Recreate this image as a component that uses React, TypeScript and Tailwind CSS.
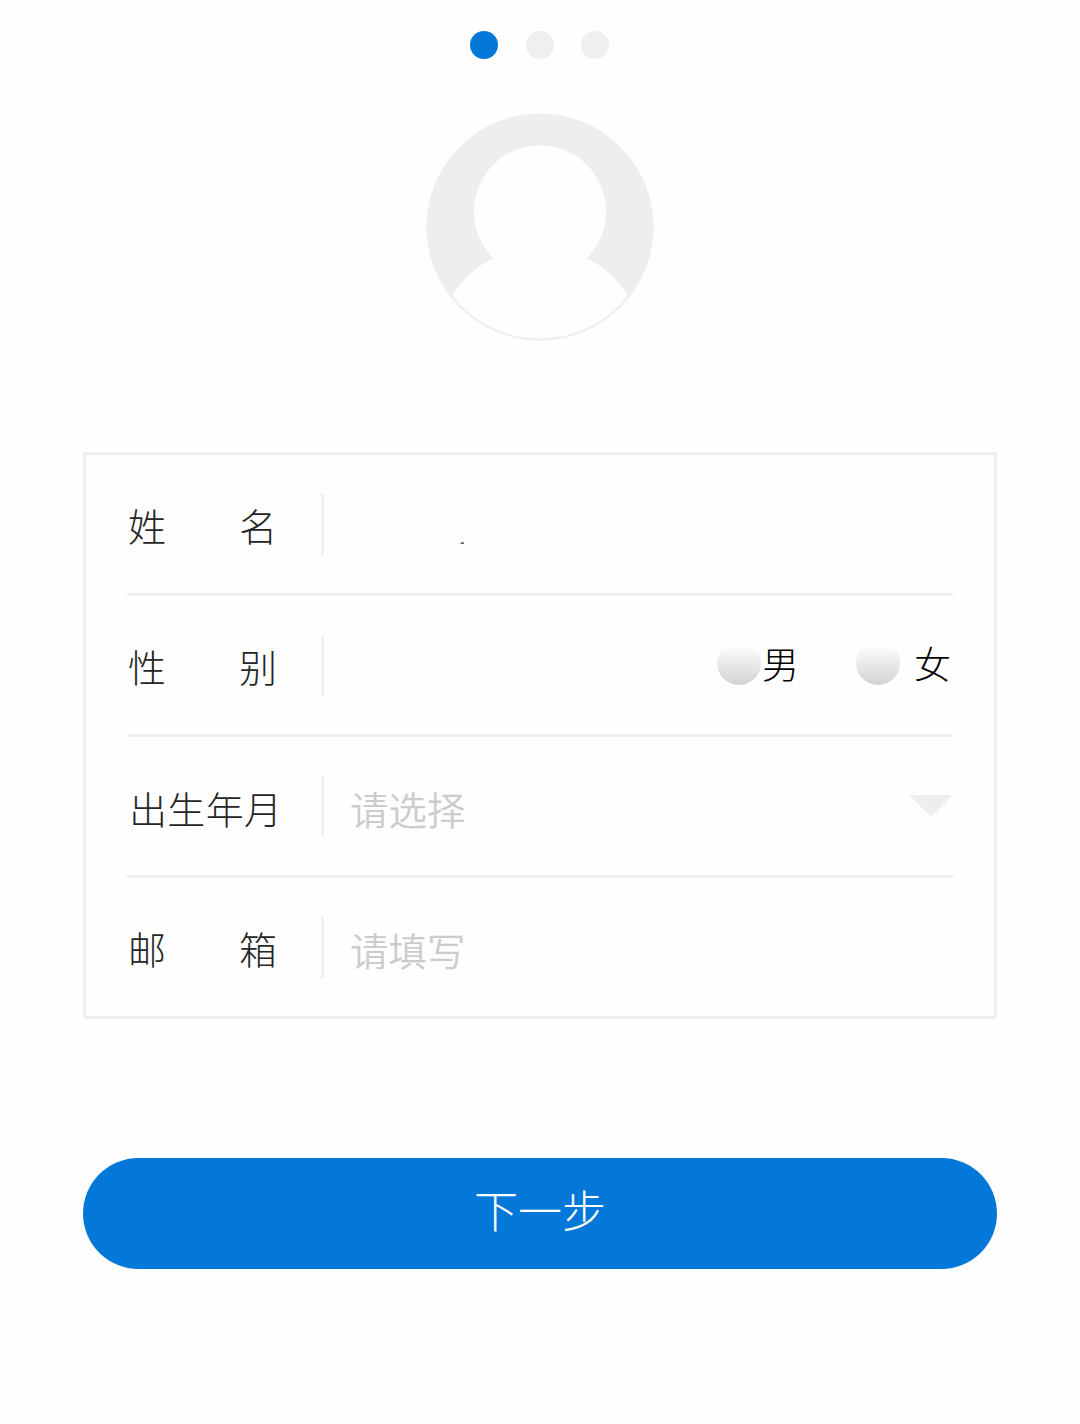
import type { ReactNode } from "react";

const steps = [
  { id: 1, color: "bg-[#0478d9]" },
  { id: 2, color: "bg-[#efefef]" },
  { id: 3, color: "bg-[#f0eeef]" },
];

function Avatar() {
  return (
    <svg className="mt-[53.5px] block h-[230px] w-[230px]" viewBox="0 0 230 230">
      <defs>
        <clipPath id="avatar-inner">
          <circle cx="115" cy="115" r="111.5" />
        </clipPath>
      </defs>
      <circle cx="115" cy="115" r="113.6" fill="#eeeeee" />
      <g clipPath="url(#avatar-inner)" fill="#fefefe">
        <circle cx="115" cy="99.5" r="66" />
        <circle cx="115" cy="239" r="104" />
      </g>
    </svg>
  );
}

type FieldProps = {
  label: string;
  last?: boolean;
  children?: ReactNode;
};

function Field({ label, last, children }: FieldProps) {
  return (
    <div
      className={
        last
          ? "flex h-[138px] items-center"
          : "flex h-[141px] items-center border-b-[3px] border-[#efefef]"
      }
    >
      <div
        className={
          label.length > 2
            ? "flex w-[155px] justify-between pt-[4px] pl-[2px] text-[#262626]"
            : "flex w-[150px] justify-between pt-[2px] pl-px text-[#262626]"
        }
      >
        {label.split("").map((char) => (
          <span key={char}>{char}</span>
        ))}
      </div>
      <div
        className={
          label.length > 2
            ? "ml-[39px] h-[61px] w-[3px] bg-[#f0f0f0]"
            : "ml-[44px] h-[61px] w-[3px] bg-[#f0f0f0]"
        }
      />
      <div className="flex flex-1 items-center pl-[26px]">{children}</div>
    </div>
  );
}

function Radio() {
  return (
    <span className="mb-px h-[44px] w-[44px] rounded-full bg-linear-to-b from-[#fefefe] from-10% to-[#d2d2d2]" />
  );
}

export default function App() {
  return (
    <div className="flex h-[1424px] w-[1080px] flex-col items-center bg-[#fefefe] pt-[30.5px] font-['Noto_Sans_CJK_SC',sans-serif] text-[38px] leading-none font-light">
      <div className="mr-px flex gap-[27.5px]">
        {steps.map((step) => (
          <span key={step.id} className={`h-7 w-7 rounded-full ${step.color}`} />
        ))}
      </div>

      <Avatar />

      <div className="mt-[110px] w-[914px] border-[3px] border-[#efefef] px-[41px]">
        <Field label="姓名">
          <svg className="mt-[38px] ml-[109px] h-[2px] w-[5px]" viewBox="0 0 5 2">
            <path d="M0 1.2 4.6 0V2H2.6V1.3Z" fill="#333333" />
          </svg>
        </Field>
        <Field label="性别">
          <div className="flex flex-1 items-center justify-end pr-[2px] pb-[4px] text-[37px] text-black">
            <Radio />
            <span className="ml-px">男</span>
            <span className="w-[56.5px]" />
            <Radio />
            <span className="ml-[14.5px]">女</span>
          </div>
        </Field>
        <Field label="出生年月">
          <span className="pt-[4px] text-[38.5px] font-[350] text-[#cccccc]">请选择</span>
          <svg className="ml-auto h-[22px] w-[44px]" viewBox="0 0 44 22">
            <path d="M0 0H44L22 22Z" fill="#eeeeee" />
          </svg>
        </Field>
        <Field label="邮箱" last>
          <span className="pt-[5px] text-[38.5px] font-[350] text-[#cccccc]">请填写</span>
        </Field>
      </div>

      <button className="mt-[139px] h-[111px] w-[914px] rounded-full bg-[#0478d9] pb-[9px] text-[44px] leading-none font-light text-white">
        下一步
      </button>
    </div>
  );
}
